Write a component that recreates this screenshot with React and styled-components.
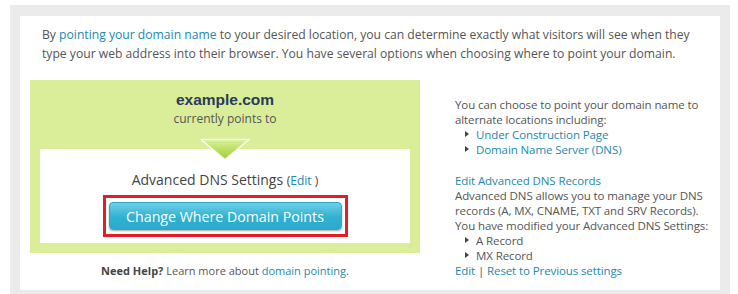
import React from 'react';
import styled, { createGlobalStyle } from 'styled-components';

const GlobalStyle = createGlobalStyle`
  body {
    margin: 0;
    background: #fff;
    font-family: "Open Sans", "Liberation Sans", sans-serif;
    color: #555;
  }
`;

const Frame = styled.div`
  margin: 5px 8px 0 10px;
  border: 10px solid #ebebeb;
  border-top-width: 11px;
  background: #fff;
  height: 274px;
`;

const Intro = styled.p`
  margin: 0;
  padding: 9px 22px 0;
  font-size: 12.15px;
  line-height: 19px;
  white-space: nowrap;
`;

const Link = styled.a`
  color: #2189ad;
  text-decoration: none;
  cursor: pointer;
`;

const Row = styled.div`
  display: flex;
  margin-top: 17px;
  padding-left: 10px;
`;

const LeftCol = styled.div`
  width: 390px;
  flex: none;
`;

const GreenBox = styled.div`
  background: #daee9a;
  padding: 10px;
  text-align: center;
`;

const Domain = styled.div`
  font-family: "Liberation Sans", Arial, sans-serif;
  font-weight: bold;
  font-size: 15.5px;
  line-height: 20px;
  color: #2c3a5a;
`;

const Sub = styled.div`
  font-size: 12px;
  line-height: 18px;
  color: #555;
`;

const Inner = styled.div`
  position: relative;
  margin-top: 21px;
  background: #fff;
  padding: 21px 0 6px;
`;

const Arrow = styled.svg`
  position: absolute;
  top: -11px;
  left: 50%;
  transform: translateX(-50%);
`;

const Current = styled.div`
  font-size: 14px;
  line-height: 20px;
  color: #444;
  margin-bottom: 4px;
`;

const Small = styled.span`
  font-size: 12px;
`;

const Highlight = styled.div`
  display: inline-block;
  border: 3px solid #e41c23;
  padding: 4px 3px;
`;

const Button = styled.button`
  display: block;
  width: 233px;
  height: 28px;
  padding: 0;
  border: 1px solid #2ea8c8;
  border-radius: 4px;
  background: linear-gradient(#70cfe6, #30b1d1 55%, #2aabcc);
  box-shadow: 0 1px 2px rgba(0, 0, 0, 0.35);
  color: #fff;
  font-family: "Open Sans", sans-serif;
  font-size: 14.2px;
  cursor: pointer;
`;

const Help = styled.div`
  margin-top: 9px;
  text-align: center;
  font-size: 11px;
  line-height: 18px;
  b { color: #444; }
`;

const RightCol = styled.div`
  margin-left: 35px;
  padding-top: 17px;
  font-size: 11.5px;
  letter-spacing: -0.1px;
  line-height: 15px;
`;

const List = styled.ul`
  list-style: none;
  margin: 0;
  padding: 0 0 0 21px;
  margin-bottom: ${p => (p.$gap ? '16px' : '0')};
`;

const Item = styled.li`
  position: relative;
  &::before {
    content: '';
    position: absolute;
    left: -11px;
    top: 4px;
    border-left: 4px solid #444;
    border-top: 3px solid transparent;
    border-bottom: 3px solid transparent;
  }
`;

export default function App() {
  return (
    <>
      <GlobalStyle />
      <Frame>
        <Intro>
          By <Link>pointing your domain name</Link> to your desired location, you can determine exactly what visitors will see when they<br />
          type your web address into their browser. You have several options when choosing where to point your domain.
        </Intro>
        <Row>
          <LeftCol>
            <GreenBox>
              <Domain>example.com</Domain>
              <Sub>currently points to</Sub>
              <Inner>
                <Arrow width="52" height="23" viewBox="0 0 52 23">
                  <defs>
                    <linearGradient id="arrowFill" x1="0" y1="0" x2="0" y2="1">
                      <stop offset="0" stopColor="#d8f29a" />
                      <stop offset="1" stopColor="#9ccf2e" />
                    </linearGradient>
                  </defs>
                  <polygon points="2,1.5 50,1.5 26,21.5" fill="url(#arrowFill)" stroke="#ffffff" strokeOpacity="0.85" strokeWidth="1.5" strokeLinejoin="round" />
                </Arrow>
                <Current>
                  Advanced DNS Settings <Small>(<Link>Edit</Link> )</Small>
                </Current>
                <Highlight>
                  <Button>Change Where Domain Points</Button>
                </Highlight>
              </Inner>
            </GreenBox>
            <Help>
              <b>Need Help?</b> Learn more about <Link>domain pointing</Link>.
            </Help>
          </LeftCol>
          <RightCol>
            <div>You can choose to point your domain name to<br />alternate locations including:</div>
            <List $gap>
              <Item><Link>Under Construction Page</Link></Item>
              <Item><Link>Domain Name Server (DNS)</Link></Item>
            </List>
            <div><Link>Edit Advanced DNS Records</Link></div>
            <div>Advanced DNS allows you to manage your DNS<br />records (A, MX, CNAME, TXT and SRV Records).<br />You have modified your Advanced DNS Settings:</div>
            <List>
              <Item>A Record</Item>
              <Item>MX Record</Item>
            </List>
            <div><Link>Edit</Link> | <Link>Reset to Previous settings</Link></div>
          </RightCol>
        </Row>
      </Frame>
    </>
  );
}
